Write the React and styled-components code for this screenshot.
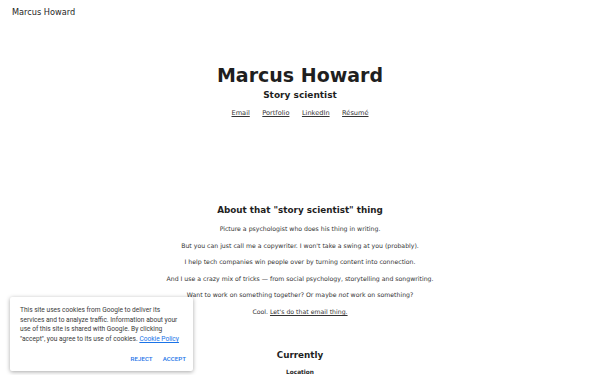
import styled, { createGlobalStyle } from "styled-components";

const INK = "#1f1f1f";
const BODY = "#333";
const BLUE = "#1a73e8";

const Global = createGlobalStyle`
  html, body { margin: 0; padding: 0; background: #fff; }
  body { font-family: "DejaVu Sans", Verdana, sans-serif; color: ${BODY}; }
`;

const Page = styled.div`
  width: 600px;
  height: 375px;
  overflow: hidden;
  position: relative;
`;

const TopBar = styled.header`
  padding: 7px 12px 0;
  font-size: 8.2px;
  line-height: 10px;
  color: ${INK};
`;

const Hero = styled.section`
  display: flex;
  flex-direction: column;
  align-items: center;
  padding-top: 47px;
  height: 176px;
  box-sizing: border-box;
`;

const Name = styled.h1`
  margin: 0;
  font-size: 19px;
  line-height: 22px;
  font-weight: 700;
  color: ${INK};
`;

const Role = styled.h2`
  margin: 3px 0 0;
  font-size: 9px;
  line-height: 12px;
  font-weight: 700;
  color: ${INK};
`;

const Links = styled.nav`
  display: flex;
  gap: 12.5px;
  margin-top: 8px;
`;

const NavLink = styled.a`
  font-size: 6.6px;
  line-height: 8px;
  color: ${BODY};
  text-decoration: underline;
`;

const Block = styled.section`
  display: flex;
  flex-direction: column;
  align-items: center;
  padding-top: ${({ $top }) => $top}px;
`;

const Heading = styled.h3`
  margin: 0 0 6px;
  font-size: 8.8px;
  line-height: 10px;
  font-weight: 700;
  color: ${INK};
`;

const Para = styled.p`
  margin: 0;
  font-size: 6.2px;
  line-height: 16.6px;
  color: ${BODY};
  text-align: center;
  white-space: nowrap;
`;

const Inline = styled.a`
  color: ${BODY};
  text-decoration: underline;
`;

const Label = styled.h4`
  margin: 2px 0 0;
  font-size: 5.8px;
  line-height: 8px;
  font-weight: 700;
  color: ${INK};
`;

const Cookie = styled.div`
  position: absolute;
  left: 10px;
  top: 297px;
  width: 183px;
  box-sizing: border-box;
  padding: 9px 7px 8px 10px;
  background: #fff;
  box-shadow: 0 1px 4px rgba(0, 0, 0, 0.35);
  border-radius: 2px;
  font-family: Roboto, "Liberation Sans", Arial, sans-serif;
`;

const CookieText = styled.p`
  margin: 0;
  font-size: 6.6px;
  line-height: 9.7px;
  color: #3a3a3a;
`;

const PolicyLink = styled.a`
  color: ${BLUE};
  text-decoration: underline;
`;

const Actions = styled.div`
  display: flex;
  justify-content: flex-end;
  gap: 10px;
  margin-top: 10px;
`;

const ActionButton = styled.button`
  border: 0;
  background: none;
  padding: 0;
  font-family: inherit;
  font-size: 6.2px;
  font-weight: 500;
  color: ${BLUE};
  cursor: pointer;
`;

export default function App() {
  return (
    <Page>
      <Global />
      <TopBar>Marcus Howard</TopBar>

      <Hero>
        <Name>Marcus Howard</Name>
        <Role>Story scientist</Role>
        <Links>
          <NavLink href="#">Email</NavLink>
          <NavLink href="#">Portfolio</NavLink>
          <NavLink href="#">LinkedIn</NavLink>
          <NavLink href="#">Résumé</NavLink>
        </Links>
      </Hero>

      <Block $top={12}>
        <Heading>About that "story scientist" thing</Heading>
        <Para>Picture a psychologist who does his thing in writing.</Para>
        <Para>But you can just call me a copywriter. I won't take a swing at you (probably).</Para>
        <Para>I help tech companies win people over by turning content into connection.</Para>
        <Para>And I use a crazy mix of tricks — from social psychology, storytelling and songwriting.</Para>
        <Para>
          Want to work on something together? Or maybe <em>not</em> work on something?
        </Para>
        <Para>
          Cool. <Inline href="#">Let's do that email thing.</Inline>
        </Para>
      </Block>

      <Block $top={29}>
        <Heading>Currently</Heading>
        <Label>Location</Label>
      </Block>

      <Cookie>
        <CookieText>
          This site uses cookies from Google to deliver its services and to analyze traffic.
          Information about your use of this site is shared with Google. By clicking
          "accept", you agree to its use of cookies.{" "}
          <PolicyLink href="#">Cookie Policy</PolicyLink>
        </CookieText>
        <Actions>
          <ActionButton>REJECT</ActionButton>
          <ActionButton>ACCEPT</ActionButton>
        </Actions>
      </Cookie>
    </Page>
  );
}
